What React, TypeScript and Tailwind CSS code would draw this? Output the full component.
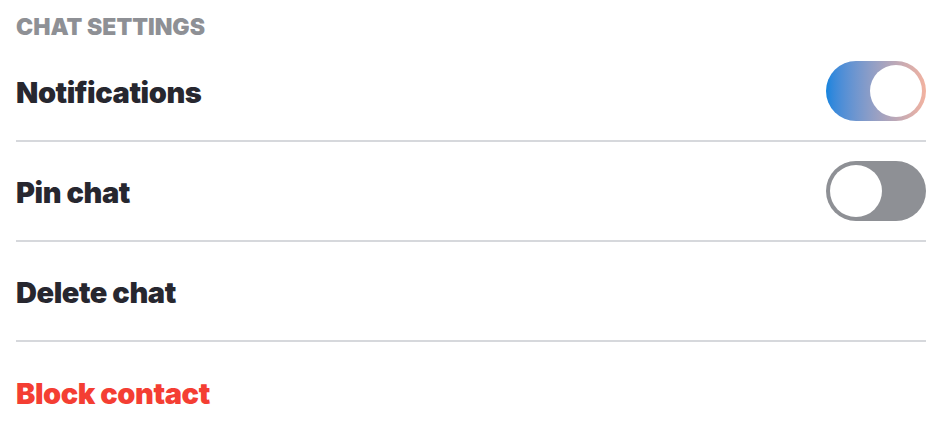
import { useState } from 'react'

function Toggle({ on, onChange }: { on: boolean; onChange: () => void }) {
  return (
    <button
      onClick={onChange}
      className={
        'flex h-[60px] w-[100px] shrink-0 items-center rounded-full p-[4px] ' +
        (on
          ? 'justify-end bg-gradient-to-r from-[#1384de] to-[#f3b29f]'
          : 'justify-start bg-[#8e9095]')
      }
    >
      <span className="block h-[52px] w-[52px] rounded-full bg-white" />
    </button>
  )
}

function Row({ label, danger, children }: { label: string; danger?: boolean; children?: React.ReactNode }) {
  return (
    <div className="flex h-[100px] items-center justify-between border-b-2 border-[#d6d8dc] last:border-b-0">
      <span
        className={
          'pt-[4px] text-[29px] font-black tracking-[-0.015em] ' + (danger ? 'text-[#f43e33]' : 'text-[#27272f]')
        }
      >
        {label}
      </span>
      {children}
    </div>
  )
}

export default function App() {
  const [notifications, setNotifications] = useState(true)
  const [pinned, setPinned] = useState(false)

  return (
    <div className="min-h-screen bg-white pl-[16px] pr-[8px] pt-[12px]" style={{ fontFamily: 'Inter, "Noto Sans", sans-serif' }}>
      <h2 className="text-[23px] font-black uppercase leading-[30px] text-[#8e9095]">Chat settings</h2>
      <Row label="Notifications">
        <Toggle on={notifications} onChange={() => setNotifications(!notifications)} />
      </Row>
      <Row label="Pin chat">
        <Toggle on={pinned} onChange={() => setPinned(!pinned)} />
      </Row>
      <Row label="Delete chat" />
      <Row label="Block contact" danger />
    </div>
  )
}
